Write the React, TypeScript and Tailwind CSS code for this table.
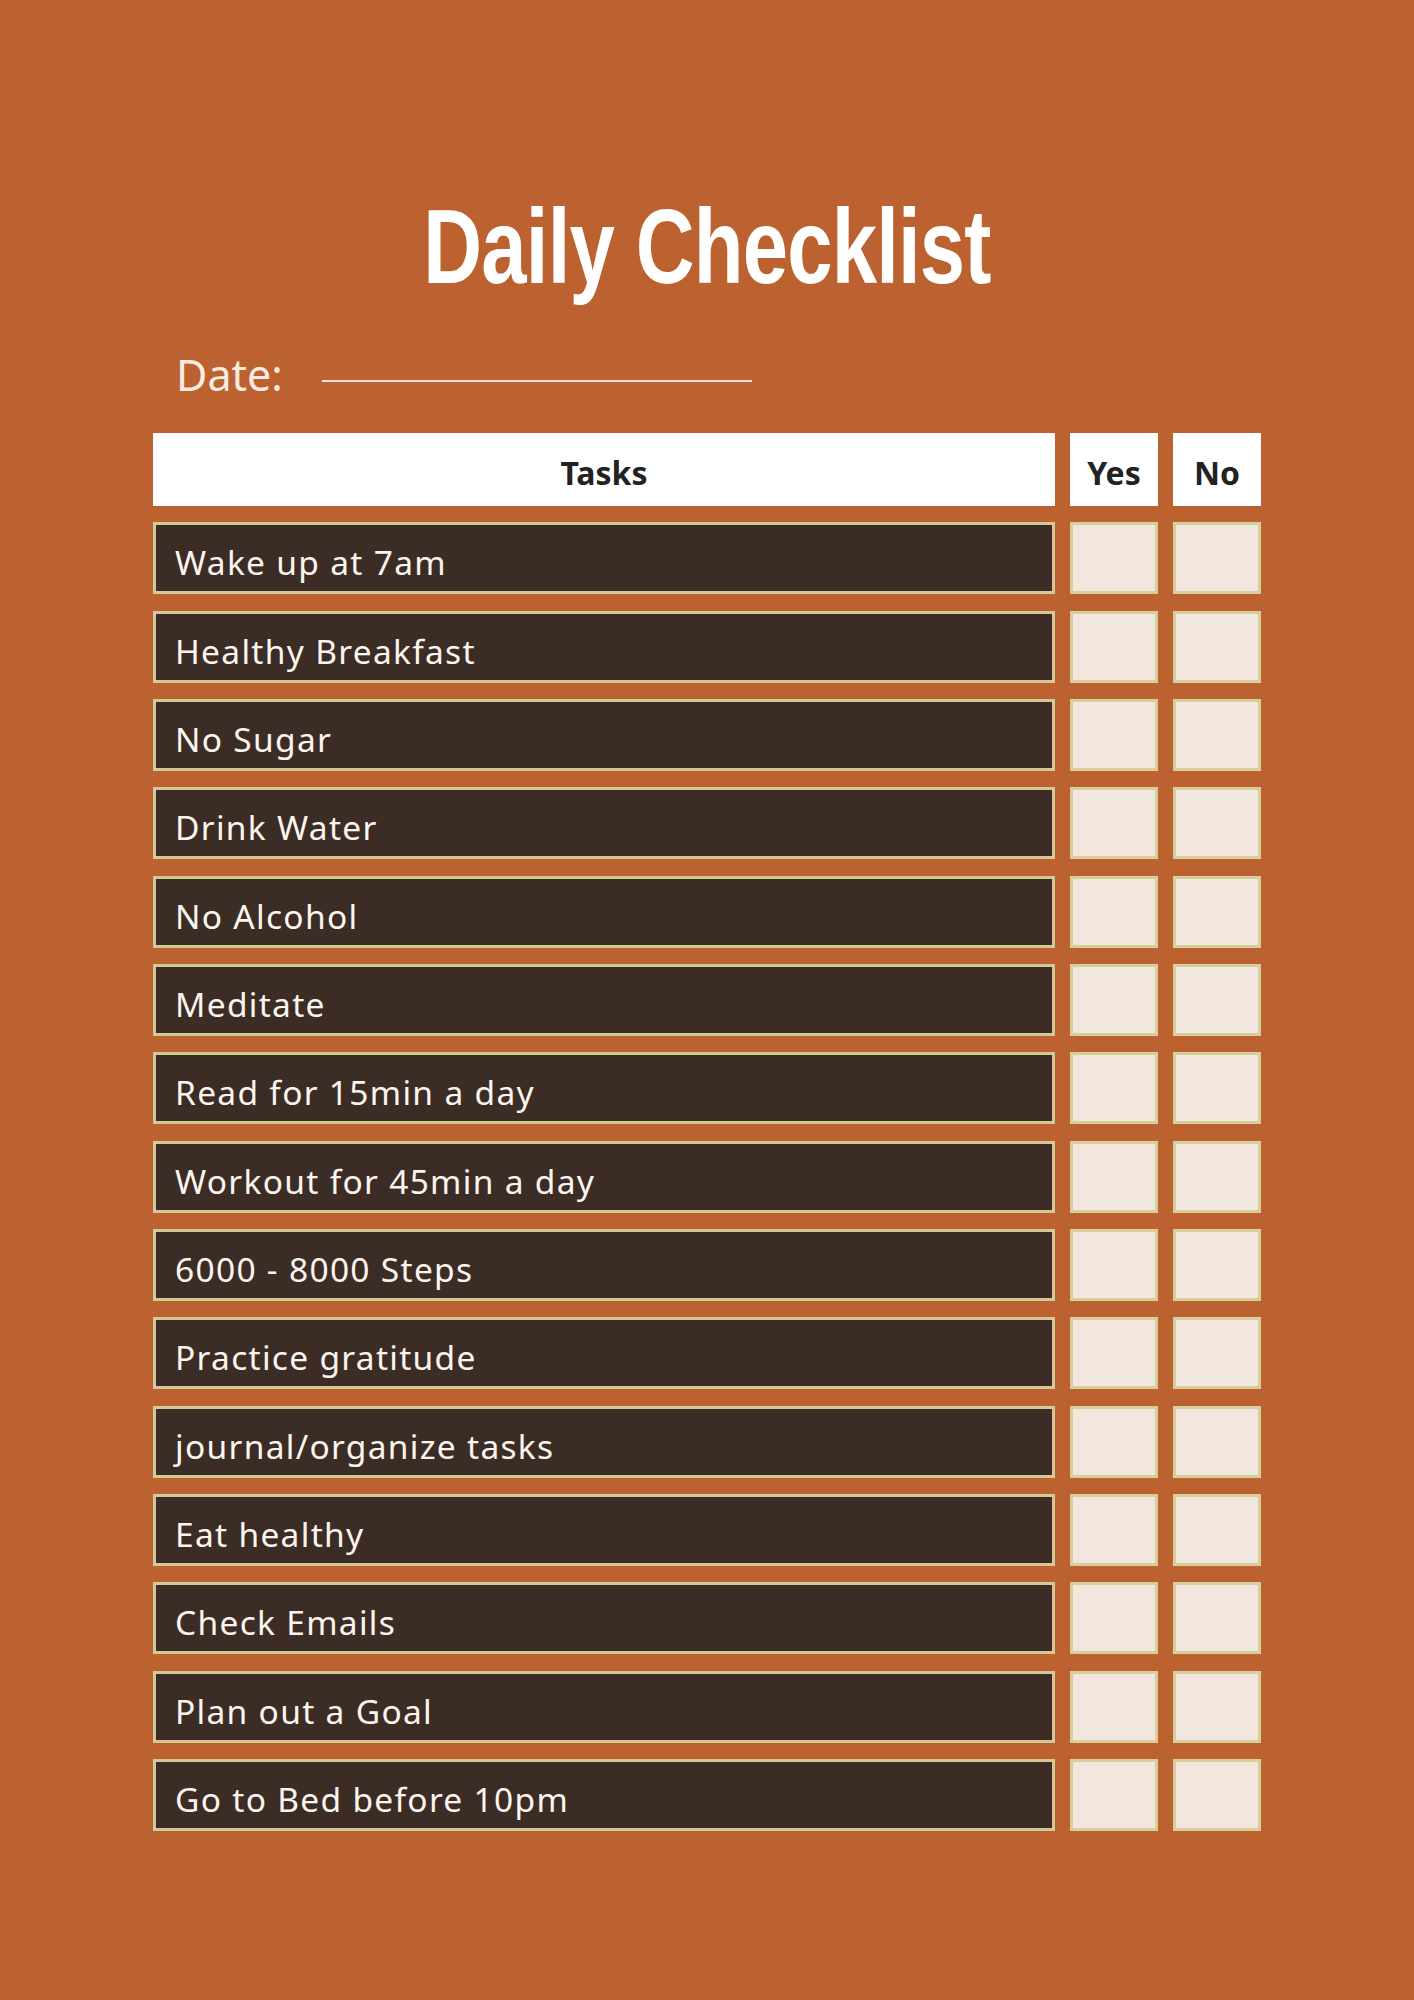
const tasks = [
  "Wake up at 7am",
  "Healthy Breakfast",
  "No Sugar",
  "Drink Water",
  "No Alcohol",
  "Meditate",
  "Read for 15min a day",
  "Workout for 45min a day",
  "6000 - 8000 Steps",
  "Practice gratitude",
  "journal/organize tasks",
  "Eat healthy",
  "Check Emails",
  "Plan out a Goal",
  "Go to Bed before 10pm",
]

const CheckBox = () => (
  <div className="h-[72px] border-[3px] border-[#d8cd9b] bg-[#f2e7df]" />
)

export default function App() {
  return (
    <div className="min-h-[2000px] w-full bg-[#bb6230] pb-[169px] font-['Noto_Sans',sans-serif]">
      <div className="mx-auto w-[1108px] pt-[194px]">
        <h1 className="text-center font-['Liberation_Sans',sans-serif] text-[105px] font-bold leading-none text-white">
          <span className="inline-block scale-x-[0.775] tracking-[-1px]">Daily Checklist</span>
        </h1>

        <div className="mt-[54px] flex items-end pl-[23px]">
          <span className="text-[43px] leading-none text-[#f8ece2]">Date:</span>
          <div className="mb-[14px] ml-[39px] h-[2px] w-[430px] bg-[#f5e6d8]" />
        </div>

        <div className="mt-[37px] grid grid-cols-[902px_88px_88px] gap-x-[15px] gap-y-[16.33px]">
          <div className="flex h-[73px] justify-center bg-white pt-[24px] text-[32px] font-bold leading-none text-[#222]">
            Tasks
          </div>
          <div className="flex h-[73px] justify-center bg-white pt-[24px] text-[32px] font-bold leading-none text-[#222]">
            Yes
          </div>
          <div className="flex h-[73px] justify-center bg-white pt-[24px] text-[32px] font-bold leading-none text-[#222]">
            No
          </div>

          {tasks.map((t) => (
            <div key={t} className="contents">
              <div className="h-[72px] border-[3px] border-[#d3c897] bg-[#3b2d26] pl-[19px] pt-[21px] text-[33.5px] leading-none tracking-[1.3px] text-[#fbf5ee]">
                {t}
              </div>
              <CheckBox />
              <CheckBox />
            </div>
          ))}
        </div>
      </div>
    </div>
  )
}
